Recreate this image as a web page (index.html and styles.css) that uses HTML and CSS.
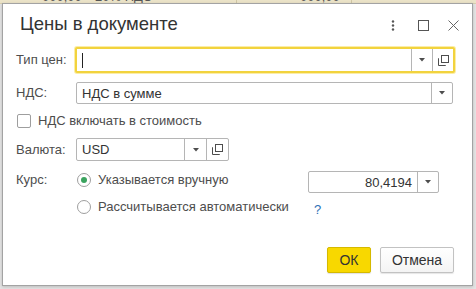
FILE: index.html
```html
<!DOCTYPE html>
<html lang="ru">
<head>
<meta charset="utf-8">
<title>Цены в документе</title>
<link rel="stylesheet" href="styles.css">
</head>
<body>
<div class="backdrop">
  <div class="bg-row">
    <span class="bg-cell bg-c1">000,00</span>
    <span class="bg-cell bg-c2">20% НДС</span>
    <span class="bg-cell bg-c3">000,00</span>
    <span class="bg-cell bg-c4"></span>
  </div>
</div>

<div class="dialog">
  <div class="titlebar">
    <div class="title">Цены в документе</div>
    <div class="title-icons">
      <span class="ticon"><svg width="4" height="11" viewBox="0 0 4 11"><circle cx="2" cy="1.5" r="1.2" fill="#555"/><circle cx="2" cy="5.5" r="1.2" fill="#555"/><circle cx="2" cy="9.5" r="1.2" fill="#555"/></svg></span>
      <span class="ticon"><svg width="11" height="11" viewBox="0 0 11 11"><rect x="0.5" y="0.5" width="10" height="10" fill="none" stroke="#555" stroke-width="1"/></svg></span>
      <span class="ticon"><svg width="11" height="11" viewBox="0 0 11 11"><path d="M0.5 0.5L10.5 10.5M10.5 0.5L0.5 10.5" stroke="#666" stroke-width="1" fill="none"/></svg></span>
    </div>
  </div>

  <div class="form">
    <div class="row row-price">
      <div class="label">Тип цен:</div>
      <div class="field field-focus">
        <div class="field-text"><span class="caret"></span></div>
        <div class="fbtn fbtn-sep">
          <svg width="6" height="4" viewBox="0 0 6 4"><path d="M0 0H6L3 3.5Z" fill="#4d4d4d"/></svg>
        </div>
        <div class="fbtn fbtn-sep">
          <svg width="11" height="11" viewBox="0 0 11 11"><rect x="3.5" y="0.5" width="7" height="7" fill="none" stroke="#4d4d4d"/><path d="M1 3.5H0.5V10.5H7.5V10" fill="none" stroke="#4d4d4d"/></svg>
        </div>
      </div>
    </div>

    <div class="row row-vat">
      <div class="label">НДС:</div>
      <div class="field field-vat">
        <div class="field-text">НДС в сумме</div>
        <div class="fbtn fbtn-sep">
          <svg width="6" height="4" viewBox="0 0 6 4"><path d="M0 0H6L3 3.5Z" fill="#4d4d4d"/></svg>
        </div>
      </div>
    </div>

    <label class="row row-check">
      <span class="checkbox"></span>
      <span class="check-text">НДС включать в стоимость</span>
    </label>

    <div class="row row-cur">
      <div class="label">Валюта:</div>
      <div class="field field-cur">
        <div class="field-text">USD</div>
        <div class="fbtn fbtn-sep fbtn-cur">
          <svg width="6" height="4" viewBox="0 0 6 4"><path d="M0 0H6L3 3.5Z" fill="#4d4d4d"/></svg>
        </div>
        <div class="fbtn fbtn-sep fbtn-cur">
          <svg width="11" height="11" viewBox="0 0 11 11"><rect x="3.5" y="0.5" width="7" height="7" fill="none" stroke="#4d4d4d"/><path d="M1 3.5H0.5V10.5H7.5V10" fill="none" stroke="#4d4d4d"/></svg>
        </div>
      </div>
    </div>

    <div class="rate-grid">
      <div class="label rate-label">Курс:</div>
      <div class="radio-line">
        <span class="radio radio-on"><span class="radio-dot"></span></span>
        <span class="radio-text">Указывается вручную</span>
      </div>
      <div class="field field-rate">
        <div class="field-text field-num">80,4194</div>
        <div class="fbtn fbtn-sep">
          <svg width="6" height="4" viewBox="0 0 6 4"><path d="M0 0H6L3 3.5Z" fill="#4d4d4d"/></svg>
        </div>
      </div>
      <div class="radio-line radio-line2">
        <span class="radio"></span>
        <span class="radio-text">Рассчитывается автоматически</span>
      </div>
      <div class="help">?</div>
    </div>

    <div class="buttons">
      <button class="btn btn-ok">ОК</button>
      <button class="btn btn-cancel">Отмена</button>
    </div>
  </div>
</div>
</body>
</html>
```

FILE: styles.css
```css
* { box-sizing: border-box; }

html, body {
  margin: 0;
  padding: 0;
}

body {
  width: 476px;
  height: 289px;
  overflow: hidden;
  background: #e4e4e4;
  font-family: "Liberation Sans", Arial, sans-serif;
  font-size: 13px;
  color: #333;
  position: relative;
}

/* background page (table behind the dialog) */
.backdrop {
  height: 4px;
  overflow: hidden;
  background: #ebe3c8;
  border-bottom: 1px solid #d9d0b0;
}

.bg-row {
  display: flex;
  margin-top: -10px;
  height: 14px;
  font-size: 13px;
  line-height: 14px;
  color: #555;
}

.bg-cell {
  display: block;
  height: 14px;
  border-right: 1px solid #cfc6a5;
}

.bg-c1 { width: 86px; padding-left: 42px; border-right: none; }
.bg-c2 { width: 151px; padding-left: 9px; }
.bg-c3 { width: 115px; padding-left: 63px; }
.bg-c4 { flex: 1; border-right: none; }

/* dialog window */
.dialog {
  position: absolute;
  left: 2px;
  top: 3px;
  width: 471px;
  height: 283px;
  background: #fff;
  border: 1px solid #a3a3a3;
  box-shadow: 0 1px 3px rgba(0, 0, 0, 0.18);
}

.titlebar {
  display: flex;
  align-items: flex-start;
  padding: 10px 4px 0 17px;
  height: 30px;
}

.title {
  flex: 1;
  font-size: 18.5px;
  line-height: 20px;
  color: #333;
  white-space: nowrap;
}

.title-icons {
  display: flex;
  align-items: center;
  height: 20px;
  margin-top: 1px;
}

.ticon {
  display: flex;
  align-items: center;
  justify-content: center;
  width: 30px;
  height: 20px;
}

.ticon svg { display: block; }

/* form */
.form {
  padding: 0 18px 0 13px;
}

.row {
  display: flex;
  align-items: center;
}

.label {
  width: 60px;
  flex: none;
  color: #4d4d4d;
  line-height: 16px;
}

.row-price {
  margin-top: 13px;
  height: 26px;
}

.row-vat {
  margin-top: 9px;
  height: 22px;
}

.row-check {
  margin-top: 10px;
  height: 13px;
  padding-left: 1px;
}

.row-cur {
  margin-top: 11px;
  height: 23px;
}

.field {
  display: flex;
  align-items: stretch;
  height: 100%;
  border: 1px solid #b5b5b5;
  border-radius: 2px;
  background: #fff;
}

.field-text {
  flex: 1;
  display: flex;
  align-items: center;
  padding-left: 5px;
  color: #333;
  white-space: nowrap;
  overflow: hidden;
}

.field-focus {
  border: 2px solid #f2d33e;
  box-shadow: 0 0 0 1px #fbeda8;
  border-radius: 2px;
  margin-left: -1px;
  margin-right: -1px;
  width: 380px;
}

.caret {
  display: block;
  width: 1px;
  height: 15px;
  background: #222;
}

.fbtn {
  display: flex;
  align-items: center;
  justify-content: center;
  width: 21px;
  flex: none;
}

.fbtn svg { display: block; }

.fbtn-sep {
  border-left: 1px solid #b5b5b5;
}

.field-vat {
  width: 377px;
}

.field-cur {
  width: 153px;
}

.fbtn-cur { width: 22px; }

/* checkbox */
.checkbox {
  display: block;
  width: 14px;
  height: 14px;
  border: 1px solid #9e9e9e;
  border-radius: 2px;
  background: #fff;
  flex: none;
}

.check-text {
  margin-left: 7px;
  color: #4d4d4d;
  line-height: 16px;
}

/* rate block */
.rate-grid {
  display: grid;
  grid-template-columns: 60px 232px 131px;
  grid-template-rows: 18px 18px;
  row-gap: 9px;
  margin-top: 10px;
}

.rate-label {
  grid-column: 1;
  grid-row: 1;
  display: flex;
  align-items: center;
}

.radio-line {
  grid-column: 2;
  grid-row: 1;
  display: flex;
  align-items: center;
  padding-left: 1px;
}

.radio-line2 {
  grid-row: 2;
}

.radio {
  display: flex;
  align-items: center;
  justify-content: center;
  width: 14px;
  height: 14px;
  border: 1px solid #9e9e9e;
  border-radius: 50%;
  background: #fff;
  flex: none;
}

.radio-dot {
  display: block;
  width: 6px;
  height: 6px;
  border-radius: 50%;
  background: #3aa35e;
}

.radio-text {
  margin-left: 7px;
  color: #4d4d4d;
  line-height: 16px;
  white-space: nowrap;
}

.field-rate {
  grid-column: 3;
  grid-row: 1;
  height: 22px;
  align-self: start;
}

.field-num {
  justify-content: flex-end;
  padding-right: 5px;
  padding-top: 1px;
}

.help {
  grid-column: 3;
  grid-row: 2;
  padding-left: 6px;
  padding-top: 4px;
  font-size: 13px;
  line-height: 16px;
  color: #2f70b5;
}

/* buttons */
.buttons {
  display: flex;
  justify-content: flex-end;
  gap: 9px;
  margin-top: 31px;
}

.btn {
  height: 26px;
  font-family: "Liberation Sans", Arial, sans-serif;
  font-size: 14px;
  color: #333;
  border-radius: 2px;
  padding: 0;
  cursor: default;
}

.btn-ok {
  width: 44px;
  background: #f8d800;
  border: 1px solid #d5b900;
  box-shadow: 0 1px 1px rgba(0, 0, 0, 0.12);
}

.btn-cancel {
  width: 74px;
  background: linear-gradient(#ffffff, #f4f4f4);
  border: 1px solid #c2c2c2;
  box-shadow: 0 1px 1px rgba(0, 0, 0, 0.1);
}
```
